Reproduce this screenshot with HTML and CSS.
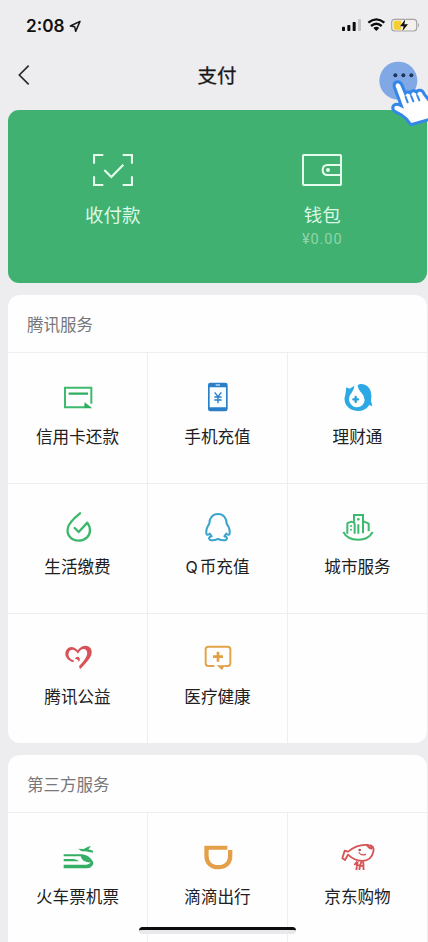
FILE: index.html
```html
<!DOCTYPE html>
<html lang="zh-CN">
<head>
<meta charset="utf-8">
<title>支付</title>
<link rel="stylesheet" href="styles.css">
</head>
<body>
<div class="phone">
  <header class="status">
    <div class="clock">2:08
      <svg class="locate" viewBox="0 0 36 39"><path d="M33 4 4 18 17 20 20 34Z"/></svg>
    </div>
    <svg class="signals" viewBox="0 0 237 45">
      <g fill="#0b0b0c"><rect x="3" y="26" width="9" height="13" rx="2"/><rect x="19" y="21" width="9" height="18" rx="2"/><rect x="35" y="12" width="9" height="27" rx="2"/></g>
      <rect x="51" y="3" width="9" height="36" rx="2" fill="#c5c5c7"/>
      <g fill="none" stroke="#0b0b0c" stroke-width="7"><path d="M82 14Q106-6 130 14"/><path d="M90 24Q106 10 122 24"/></g>
      <path d="M97 30Q106 23 115 30L106 39Z" fill="#0b0b0c"/>
      <rect x="152" y="4" width="75" height="35" rx="9" fill="#f1f0ec" stroke="#a5a4a3" stroke-width="3.5"/>
      <path d="M163 8H180V35H163Q158 35 158 30V13Q158 8 163 8Z" fill="#f8cd30"/>
      <path d="M231 15Q237 21 231 28Z" fill="#9c9c9e"/>
      <path d="M193 4 177 25H188L184 40 201 19H190Z" fill="#111" stroke="#f5edcf" stroke-width="3" paint-order="stroke"/>
    </svg>
  </header>
  <nav class="navbar">
    <svg class="back" viewBox="0 0 36 60"><path d="M32 2 4 30 32 58"/></svg>
    <h1>支付</h1>
    <svg class="pointer" viewBox="234 180 150 201">
      <circle cx="295" cy="242" r="57" fill="#80a8e4"/>
      <g fill="#20345c"><circle cx="286" cy="226" r="6"/><circle cx="310" cy="226" r="6"/><circle cx="334" cy="226" r="6"/></g>
      <path d="M287 259Q286 251 293 250Q299 250 302 258L317 294Q314 284 321 281Q329 279 332 289L334 292Q332 279 339 277Q347 276 350 286L352 290Q350 277 358 275Q365 274 369 285L390 312V353L334 369Q323 351 307 341L286 330Q281 325 284 320Q288 315 297 319L312 326Z" fill="#fff" stroke="#3487e8" stroke-width="18" stroke-linejoin="round" paint-order="stroke"/>
      <path d="M317 291 323 307M334 289 340 304M352 287 358 301" fill="none" stroke="#3487e8" stroke-width="6" stroke-linecap="round"/>
    </svg>
  </nav>

  <main>
    <section class="wallet">
      <div class="wallet-item">
        <svg viewBox="0 0 120 96"><g fill="none" stroke="#e5fced" stroke-width="6.5"><path d="M3 29V3H31M89 3H117V29M117 67V93H89M31 93H3V67"/><path d="M34 48 55 69 91 32"/></g></svg>
        <span>收付款</span>
      </div>
      <div class="wallet-item">
        <svg viewBox="0 0 120 96"><g fill="none" stroke="#e5fced" stroke-width="6"><rect x="3" y="3" width="114" height="90" rx="2"/><path d="M116 33H77Q62 33 62 48T77 63H116"/></g><circle cx="78" cy="48" r="6" fill="#e5fced"/></svg>
        <span>钱包</span>
        <small>¥0.00</small>
      </div>
    </section>

    <section class="card">
      <h2>腾讯服务</h2>
      <div class="grid">
        <div class="cell">
          <svg viewBox="0 0 120 120"><path d="M100 80V32H21V91H80" fill="none" stroke="#3dba6c" stroke-width="6"/><path d="M32 50H90" stroke="#2eae60" stroke-width="7"/><path d="M80 76 103 94H78Z" fill="#2eae60"/></svg>
          <span>信用卡还款</span>
        </div>
        <div class="cell">
          <svg viewBox="0 0 120 120"><rect x="30" y="17" width="59" height="86" rx="7" fill="#2a7fc7"/><path d="M35 31H84V91H35Z" fill="#f8fdff"/><path d="M53 24H66" stroke="#fff" stroke-width="3"/><path d="M50 46 60 59 70 46M60 59V79M49 60H71M49 69H71" fill="none" stroke="#2a7fc7" stroke-width="4"/></svg>
          <span>手机充值</span>
        </div>
        <div class="cell">
          <svg viewBox="0 0 120 120"><path d="M59 25Q66 19 76 22Q93 27 98 43Q102 57 99 71L103 88 94 84Q82 102 60 102Q37 102 25 85Q16 70 22 53L25 31 35 35 49 26Q49 37 41 47Q29 60 35 76Q42 91 57 91Q77 90 80 70Q80 58 71 48Q60 38 59 25Z" fill="#2ca9e4"/><path d="M53 60V75M46 67H60" stroke="#2c9fd6" stroke-width="7" stroke-linecap="round"/></svg>
          <span>理财通</span>
        </div>
        <div class="cell">
          <svg viewBox="0 0 120 120"><path d="M66 19Q31 47 29 65C26 86 42 101 61 101C82 101 96 87 96 70Q96 57 88 47L62 75 50 63" fill="none" stroke="#3cb76b" stroke-width="7" stroke-linecap="round" stroke-linejoin="round"/></svg>
          <span>生活缴费</span>
        </div>
        <div class="cell">
          <svg viewBox="0 0 120 120"><path d="M60 21C43 21 34 34 34 50Q23 66 25 80Q26 87 35 80L41 88Q29 91 35 98Q43 103 60 96Q77 103 85 98Q91 91 79 88L85 80Q94 87 95 80Q97 66 86 50C86 34 77 21 60 21Z" fill="none" stroke="#38a4cc" stroke-width="6" stroke-linejoin="round"/></svg>
          <span><b class="latin">Q</b>币充值</span>
        </div>
        <div class="cell">
          <svg viewBox="0 0 120 120"><g fill="none" stroke="#3dba70" stroke-width="6"><path d="M28 80V50Q28 47 40 44Q50 47 50 50V80M48 44V24H75V79M77 43 92 50V73M61 52V80"/><path d="M16 75Q28 98 60 98T104 75"/></g><g fill="#3dba70"><circle cx="61" cy="37" r="4"/><circle cx="39" cy="57" r="3"/><circle cx="39" cy="68" r="3"/></g></svg>
          <span>城市服务</span>
        </div>
        <div class="cell">
          <svg viewBox="0 0 120 120"><path d="M47 76C25 70 18 53 24 41C33 25 49 28 59 40C69 26 87 21 98 34C109 53 91 72 66 97L63 88C82 68 93 52 85 40C77 31 66 39 60 50C51 36 38 35 33 45C28 57 36 67 47 70Z" fill="#d85358"/><path d="M51 66Q54 57 62 60Q70 67 61 75Q63 67 51 66Z" fill="#d85358"/></svg>
          <span>腾讯公益</span>
        </div>
        <div class="cell">
          <svg viewBox="0 0 120 120"><path d="M49 87H31Q23 87 23 79V37Q23 29 31 29H89Q97 29 97 37V79Q97 87 89 87H79" fill="none" stroke="#e2a44b" stroke-width="6"/><path d="M60 44V74M45 59H75" stroke="#e2a044" stroke-width="8"/><path d="M56 85H81L72 99Z" fill="#e2a044"/></svg>
          <span>医疗健康</span>
        </div>
        <div class="cell"></div>
      </div>
    </section>

    <section class="card last">
      <h2>第三方服务</h2>
      <div class="grid">
        <div class="cell">
          <svg viewBox="0 0 120 120"><path d="M17 52H73Q92 54 104 72Q109 80 102 87Q98 94 87 94H17V83H86Q95 82 99 76Q88 77 78 72Q70 67 68 58H17Z" fill="#35af66"/><path d="M17 66H44Q58 67 63 73H17Z" fill="#35af66"/><path d="M60 35 77 36 90 29 99 27 91 37 105 41 104 47 82 43 71 43Z" fill="#35af66"/></svg>
          <span>火车票机票</span>
        </div>
        <div class="cell">
          <svg viewBox="0 0 120 120"><path d="M19 26H88V38H32V56C32 74 43 84 61 84C80 84 90 73 90 56V39H103V57C103 82 86 97 61 97C36 97 19 81 19 56Z" fill="#e3a049"/></svg>
          <span>滴滴出行</span>
        </div>
        <div class="cell">
          <svg viewBox="0 0 120 120"><g fill="none" stroke="#d65356" stroke-width="5.5" stroke-linejoin="round"><path d="M30 44Q58 20 91 24Q110 25 106 44Q101 71 72 72Q49 71 30 53L21 69 13 64 20 41 29 44Z"/><path d="M58 73 49 84M59 73 55 99M70 74 66 86 76 87 77 99M64 99 66 85 54 84M75 73 77 87"/><path d="M62 46Q68 57 84 52" stroke-width="3.5"/></g><path d="M84 26 106 29 101 38 93 35Z" fill="#d65356"/><circle cx="65" cy="39" r="4" fill="#b54951"/></svg>
          <span>京东购物</span>
        </div>
      </div>
    </section>
  </main>
  <div class="home-indicator"></div>
</div>
</body>
</html>
```
FILE: styles.css
```css
* { box-sizing: border-box; }

body {
  margin: 0;
  background: #ededf0;
  color: #202022;
  font-family: "Noto Sans CJK SC", sans-serif;
}

.phone {
  position: relative;
  width: 428px;
  height: 942px;
  overflow: hidden;
}

.status {
  display: flex;
  justify-content: space-between;
  height: 50px;
  padding: 18px 8px 0 26px;
}

.clock {
  display: flex;
  align-items: center;
  gap: 4px;
  height: 16px;
  color: #111;
  font: 600 17.2px/16px Inter, sans-serif;
}

.locate { width: 12px; height: 13px; }
.locate path { fill: none; stroke: #151515; stroke-width: 4.5; stroke-linejoin: round; }
.signals { width: 79px; height: 15px; }

.navbar {
  position: relative;
  display: flex;
  align-items: center;
  justify-content: center;
  height: 60px;
  padding: 0 0 10px 6px;
}

.back { position: absolute; left: 18px; top: 15px; width: 12px; height: 20px; }
.back path { fill: none; stroke: #29292b; stroke-width: 5; }

h1 {
  margin: 0;
  color: #171719;
  font-size: 19.5px;
  font-weight: 400;
  line-height: 28px;
  -webkit-text-stroke: 0.3px #171719;
}

.pointer {
  position: absolute;
  z-index: 2;
  left: 378px;
  top: 10px;
  width: 50px;
  height: 67px;
}

main {
  display: flex;
  flex-direction: column;
  gap: 12px;
  width: 419px;
  margin-left: 8px;
}

.wallet {
  display: grid;
  grid-template-columns: 1fr 1fr;
  height: 173px;
  border-radius: 11px;
  background: #40b170;
}

.wallet-item {
  display: flex;
  flex-direction: column;
  align-items: center;
  padding-top: 44px;
  color: #dcf8e6;
}

.wallet-item svg { width: 40px; height: 32px; }
.wallet-item span { margin-top: 14px; font-size: 18.5px; line-height: 28px; }

.wallet-item small {
  margin-top: 2px;
  color: #91d5ab;
  font: 14.5px/20px Roboto, sans-serif;
  letter-spacing: 0.9px;
}

.card {
  height: 448px;
  overflow: hidden;
  border-radius: 12px;
  background: #fefefe;
}

.card.last { height: 200px; border-radius: 12px 12px 0 0; }

h2 {
  height: 58px;
  margin: 0;
  padding: 0 19px;
  border-bottom: 1px solid #eeeeef;
  color: #77777a;
  font-size: 16.5px;
  font-weight: 400;
  line-height: 58px;
}

.grid {
  display: grid;
  grid-template-columns: 140px 140px 1fr;
  grid-auto-rows: 130px;
}

.cell {
  display: flex;
  flex-direction: column;
  align-items: center;
  padding-top: 24px;
  border-right: 1px solid #eeeeef;
}

.cell:nth-child(3n) { border-right: 0; }
.cell:nth-child(n + 4) { padding-top: 23px; border-top: 1px solid #eeeeef; }
.cell svg { width: 40px; height: 40px; }
.cell span { margin-top: 7px; font-size: 16.6px; line-height: 24px; }
.latin { margin-right: 2px; font: 16px/1 Inter, sans-serif; }

.last .cell { height: 140px; }

.home-indicator {
  position: absolute;
  left: 139px;
  bottom: 8px;
  width: 157px;
  height: 7px;
  border-top: 3px solid #0d0d0e;
  border-radius: 4px;
  background: #e9e9eb;
}
```
